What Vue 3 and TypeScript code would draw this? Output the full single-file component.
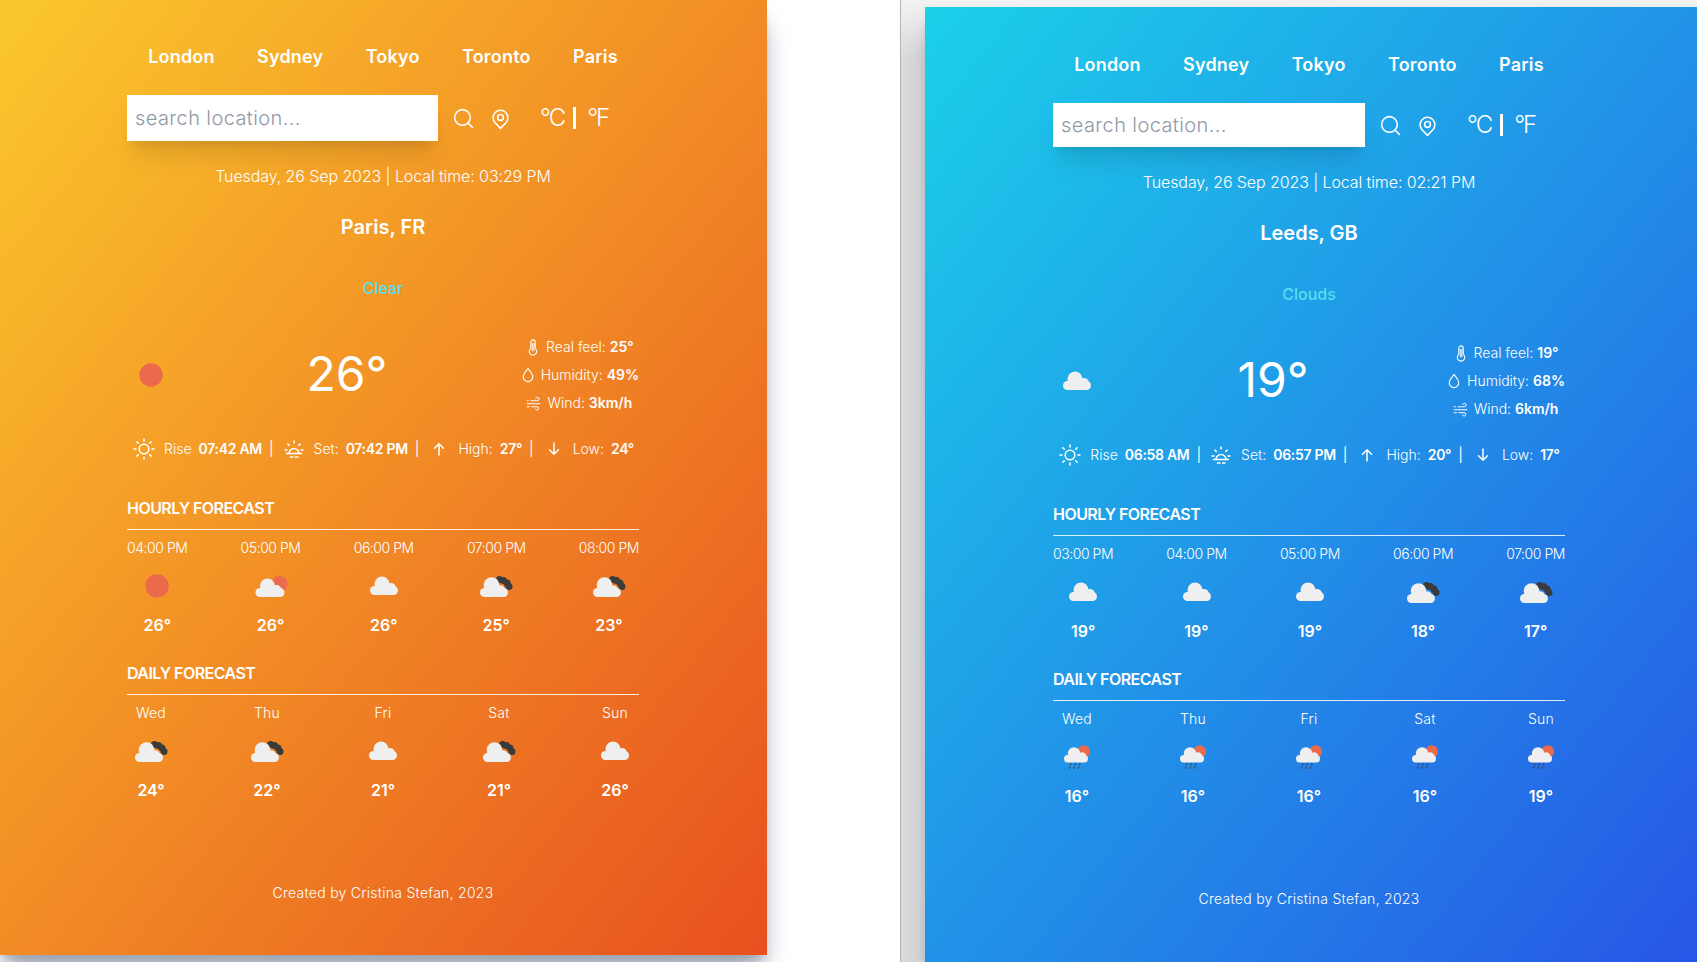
<script setup lang="ts">
type Slot = { label: string; icon: string; temp: string };
type Panel = {
  tone: string;
  date: string;
  city: string;
  cond: string;
  icon: string;
  temp: string;
  feel: string;
  humidity: string;
  wind: string;
  rise: string;
  set: string;
  high: string;
  low: string;
  hourly: Slot[];
  daily: Slot[];
};

const cities = ["London", "Sydney", "Tokyo", "Toronto", "Paris"];

const slot = (label: string, icon: string, temp: string): Slot => ({ label, icon, temp });

const panels: Panel[] = [
  {
    tone: "warm",
    date: "Tuesday, 26 Sep 2023 | Local time: 03:29 PM",
    city: "Paris, FR",
    cond: "Clear",
    icon: "sun",
    temp: "26°",
    feel: "25°",
    humidity: "49%",
    wind: "3km/h",
    rise: "07:42 AM",
    set: "07:42 PM",
    high: "27°",
    low: "24°",
    hourly: [
      slot("04:00 PM", "sun", "26°"),
      slot("05:00 PM", "few", "26°"),
      slot("06:00 PM", "cloud", "26°"),
      slot("07:00 PM", "broken", "25°"),
      slot("08:00 PM", "broken", "23°"),
    ],
    daily: [
      slot("Wed", "broken", "24°"),
      slot("Thu", "broken", "22°"),
      slot("Fri", "cloud", "21°"),
      slot("Sat", "broken", "21°"),
      slot("Sun", "cloud", "26°"),
    ],
  },
  {
    tone: "cool",
    date: "Tuesday, 26 Sep 2023 | Local time: 02:21 PM",
    city: "Leeds, GB",
    cond: "Clouds",
    icon: "cloud",
    temp: "19°",
    feel: "19°",
    humidity: "68%",
    wind: "6km/h",
    rise: "06:58 AM",
    set: "06:57 PM",
    high: "20°",
    low: "17°",
    hourly: [
      slot("03:00 PM", "cloud", "19°"),
      slot("04:00 PM", "cloud", "19°"),
      slot("05:00 PM", "cloud", "19°"),
      slot("06:00 PM", "broken", "18°"),
      slot("07:00 PM", "broken", "17°"),
    ],
    daily: [
      slot("Wed", "rain", "16°"),
      slot("Thu", "rain", "16°"),
      slot("Fri", "rain", "16°"),
      slot("Sat", "rain", "16°"),
      slot("Sun", "rain", "19°"),
    ],
  },
];
</script>

<template>
  <div class="stage">
    <svg class="sprite" aria-hidden="true">
      <symbol id="wx-sun" viewBox="0 0 48 48">
        <circle cx="24" cy="24" r="11.7" fill="#ec6a4c" />
      </symbol>
      <symbol id="wx-cloud" viewBox="0 0 48 48">
        <g fill="#efefef">
          <rect x="10" y="24" width="28" height="9" rx="4.5" />
          <circle cx="22" cy="22" r="7.5" />
          <circle cx="31" cy="26" r="5" />
        </g>
      </symbol>
      <symbol id="wx-broken" viewBox="0 0 48 48">
        <g fill="#3b3b3b">
          <circle cx="27.5" cy="17.5" r="3.5" />
          <circle cx="31.5" cy="18.5" r="3.5" />
          <circle cx="35" cy="21" r="3.5" />
          <circle cx="37" cy="24.5" r="3.5" />
        </g>
        <g fill="#efefef">
          <rect x="8" y="26" width="28" height="9" rx="4.5" />
          <circle cx="19.5" cy="23" r="7.8" />
          <circle cx="28" cy="28" r="4.8" />
        </g>
      </symbol>
      <symbol id="wx-few" viewBox="0 0 48 48">
        <circle cx="32.5" cy="22" r="8" fill="#ec6a4c" />
        <g fill="#efefef" transform="translate(-1.5 2)">
          <rect x="10" y="24" width="29" height="9" rx="4.5" />
          <circle cx="22" cy="22" r="7.5" />
          <circle cx="31" cy="26" r="5" />
        </g>
      </symbol>
      <symbol id="wx-rain" viewBox="0 -1.5 48 48">
        <circle cx="30.7" cy="17" r="6.3" fill="#ec6a4c" />
        <g fill="#efefef">
          <rect x="11" y="20.5" width="24" height="7.5" rx="3.7" />
          <circle cx="21" cy="19" r="6.2" />
          <circle cx="29" cy="22" r="4.2" />
        </g>
        <g stroke="#3f4552" stroke-width="1.3" stroke-dasharray="2 1.4">
          <path d="M18 29l-2 6M22.5 29l-2 6M27 29l-2 6" />
        </g>
      </symbol>
      <symbol id="i-search" viewBox="0 0 24 24">
        <g fill="none" stroke="currentColor" stroke-width="1.5" stroke-linecap="round">
          <circle cx="11" cy="11" r="7.5" />
          <path d="M16.6 16.6L20.5 20.5" />
        </g>
      </symbol>
      <symbol id="i-pin" viewBox="0 0 24 24">
        <g fill="none" stroke="currentColor" stroke-width="1.5" stroke-linejoin="round">
          <path d="M12 21.5l-5-5.2a7.1 7.1 0 1 1 10 0z" />
          <circle cx="12" cy="11" r="2.8" />
        </g>
      </symbol>
      <symbol id="i-temp" viewBox="0 0 24 24">
        <g fill="none" stroke="currentColor" stroke-width="1.4" stroke-linecap="round">
          <path d="M12 2.5a3 3 0 0 0-3 3v8.3a5 5 0 1 0 6 0V5.5a3 3 0 0 0-3-3z" />
          <path d="M11 7v10M13.2 7v10" />
        </g>
      </symbol>
      <symbol id="i-drop" viewBox="0 0 24 24">
        <path
          d="M12 3.5c-3 3.5-6.3 7.3-6.3 11a6.3 6.3 0 0 0 12.6 0c0-3.7-3.3-7.5-6.3-11z"
          fill="none"
          stroke="currentColor"
          stroke-width="1.5"
        />
      </symbol>
      <symbol id="i-wind" viewBox="0 0 24 24">
        <g fill="none" stroke="currentColor" stroke-width="1.3" stroke-linecap="round">
          <path d="M8 9h8.5a2.3 2.3 0 1 0-2.2-3" />
          <path d="M3 9h1.5M3 13h17M3 17h3" />
          <path d="M9 17h7a2.2 2.2 0 1 1-2 3" />
        </g>
      </symbol>
      <symbol id="i-sunrise" viewBox="0 0 24 24">
        <g fill="none" stroke="currentColor" stroke-width="1.5" stroke-linecap="round">
          <circle cx="12" cy="12" r="4.8" />
          <path d="M12 2v2M12 20v2M2 12h2M20 12h2M4.9 4.9l1.4 1.4M17.7 17.7l1.4 1.4M4.9 19.1l1.4-1.4M17.7 6.3l1.4-1.4" />
        </g>
      </symbol>
      <symbol id="i-sunset" viewBox="0 0 24 24">
        <g fill="none" stroke="currentColor" stroke-width="1.5" stroke-linecap="round">
          <path d="M7 16.5a5 5 0 0 1 10 0" />
          <path d="M4.5 16.5h15M12 4v2M3 13h2M19 13h2M5.8 7l1.4 1.4M18.2 7l-1.4 1.4M8.5 20h2.5M13.5 20h2.5" />
        </g>
      </symbol>
      <symbol id="i-up" viewBox="0 0 24 24">
        <path d="M12 20V5M6 11l6-6 6 6" fill="none" stroke="currentColor" stroke-width="2" stroke-linecap="round" stroke-linejoin="round" />
      </symbol>
      <symbol id="i-down" viewBox="0 0 24 24">
        <path d="M12 4v15M6 13l6 6 6-6" fill="none" stroke="currentColor" stroke-width="2" stroke-linecap="round" stroke-linejoin="round" />
      </symbol>
    </svg>

    <div v-for="p in panels" :key="p.tone" :class="['frame', `frame--${p.tone}`]">
      <section :class="['panel', `panel--${p.tone}`]">
        <nav class="cities">
          <button v-for="c in cities" :key="c" class="city-btn">{{ c }}</button>
        </nav>

        <div class="search-row">
          <input class="search-input" type="text" placeholder="search location..." />
          <svg class="tool"><use href="#i-search" /></svg>
          <svg class="tool tool--pin"><use href="#i-pin" /></svg>
          <div class="units">
            <button class="unit">°C</button>
            <span class="unit-sep"></span>
            <button class="unit">°F</button>
          </div>
        </div>

        <p class="date">{{ p.date }}</p>
        <h1 class="place">{{ p.city }}</h1>
        <p class="cond">{{ p.cond }}</p>

        <div class="now">
          <svg class="wx"><use :href="`#wx-${p.icon}`" /></svg>
          <div class="now-temp">{{ p.temp }}</div>
          <ul class="details">
            <li><svg class="ico"><use href="#i-temp" /></svg>Real feel: <b>{{ p.feel }}</b></li>
            <li><svg class="ico"><use href="#i-drop" /></svg>Humidity: <b>{{ p.humidity }}</b></li>
            <li><svg class="ico"><use href="#i-wind" /></svg>Wind: <b>{{ p.wind }}</b></li>
          </ul>
        </div>

        <div class="sun-row">
          <svg class="ico ico--lg"><use href="#i-sunrise" /></svg>
          <span>Rise</span><b>{{ p.rise }}</b><i class="bar">|</i>
          <svg class="ico ico--lg"><use href="#i-sunset" /></svg>
          <span>Set:</span><b>{{ p.set }}</b><i class="bar">|</i>
          <svg class="ico ico--md"><use href="#i-up" /></svg>
          <span>High:</span><b>{{ p.high }}</b><i class="bar">|</i>
          <svg class="ico ico--md"><use href="#i-down" /></svg>
          <span>Low:</span><b>{{ p.low }}</b>
        </div>

        <h2 class="fc-title fc-title--first">HOURLY FORECAST</h2>
        <div class="fc-row fc-row--hours">
          <div v-for="h in p.hourly" :key="h.label" class="fc-item">
            <span class="fc-label">{{ h.label }}</span>
            <svg class="wx"><use :href="`#wx-${h.icon}`" /></svg>
            <b class="fc-temp">{{ h.temp }}</b>
          </div>
        </div>

        <h2 class="fc-title">DAILY FORECAST</h2>
        <div class="fc-row">
          <div v-for="d in p.daily" :key="d.label" class="fc-item">
            <span class="fc-label">{{ d.label }}</span>
            <svg class="wx"><use :href="`#wx-${d.icon}`" /></svg>
            <b class="fc-temp">{{ d.temp }}</b>
          </div>
        </div>

        <footer class="foot">Created by Cristina Stefan, 2023</footer>
      </section>
    </div>
  </div>
</template>

<style scoped>
.stage {
  display: flex;
  width: 1697px;
  height: 962px;
  overflow: hidden;
  background: #fff;
  font-family: Inter, "Liberation Sans", sans-serif;
  color: #fff;
}
.sprite {
  position: absolute;
  width: 0;
  height: 0;
}
.frame {
  flex: none;
}
.frame--warm {
  width: 767px;
}
.frame--cool {
  width: 797px;
  margin-left: 133px;
  padding: 7px 0 0 24px;
  border-left: 1px solid #b4b4b4;
  background: linear-gradient(#f3f3f3, #dadadc 60px);
}
.panel {
  display: flex;
  flex-direction: column;
  box-sizing: border-box;
  width: 767px;
  height: 955px;
  padding: 43px 128px 0 127px;
  box-shadow: 0 20px 25px -5px #9ca3af, 0 8px 10px -6px #9ca3af;
}
.panel--warm {
  background: linear-gradient(to bottom right, #fbc82c, #e8501f);
}
.panel--cool {
  width: 772px;
  padding: 44px 132px 0 128px;
  background: linear-gradient(to bottom right, #1bd0e9, #2756e6);
}
.cities {
  display: flex;
  justify-content: space-around;
  height: 27px;
}
.city-btn {
  border: 0;
  padding: 0;
  background: none;
  color: #fff;
  font: 600 18px/27px Inter, sans-serif;
  letter-spacing: 0.2px;
}
.search-row {
  display: flex;
  align-items: center;
  height: 46px;
  margin-top: 25px;
}
.panel--cool .search-row {
  margin-top: 24px;
}
.search-input {
  box-sizing: border-box;
  width: 311px;
  height: 46px;
  border: 0;
  outline: 0;
  padding: 0 8px;
  background: #fff;
  font: 300 20px Inter, sans-serif;
  letter-spacing: 0.4px;
  box-shadow: 0 20px 25px -5px rgba(0, 0, 0, 0.1), 0 8px 10px -6px rgba(0, 0, 0, 0.1);
}
.panel--cool .search-input {
  width: 312px;
  height: 44px;
}
.search-input::placeholder {
  color: #8f99a8;
}
.tool {
  flex: none;
  width: 25px;
  height: 25px;
  margin-left: 13px;
}
.tool--pin {
  margin-left: 12px;
}
.units {
  display: flex;
  align-items: center;
  margin-left: 27px;
}
.unit {
  border: 0;
  padding: 0;
  background: none;
  color: #fff;
  font: 300 24px/32px Inter, sans-serif;
  letter-spacing: -2px;
}
.unit-sep {
  width: 3px;
  height: 22px;
  margin: 0 11px 0 9px;
  background: #fff;
}
.date {
  margin: 23px 0 0;
  font-weight: 300;
  font-size: 16px;
  line-height: 24px;
  letter-spacing: -0.1px;
  text-align: center;
}
.panel--cool .date {
  margin-top: 22px;
}
.place {
  margin: 24px 0 0;
  font-weight: 600;
  font-size: 20px;
  line-height: 30px;
  text-align: center;
}
.cond {
  margin: 34px 0 0;
  color: #56dfee;
  font-weight: 500;
  font-size: 16px;
  line-height: 24px;
  text-align: center;
}
.now {
  display: flex;
  align-items: center;
  justify-content: space-between;
  height: 90px;
  margin-top: 30px;
}
.wx {
  flex: none;
  width: 48px;
  height: 48px;
}
.now-temp {
  padding-bottom: 3px;
  font-size: 48px;
  font-weight: 400;
  line-height: 60px;
}
.details {
  display: flex;
  flex-direction: column;
  align-items: center;
  gap: 8px;
  margin: 0;
  padding: 0;
  list-style: none;
  font-weight: 300;
  font-size: 14px;
  line-height: 20px;
}
.details li {
  display: flex;
  align-items: center;
  white-space: pre;
}
.details .ico {
  margin-right: 4px;
}
b {
  font-weight: 600;
}
.ico {
  flex: none;
  width: 18px;
  height: 18px;
}
.ico--lg {
  width: 24px;
  height: 24px;
}
.ico--md {
  width: 18px;
  height: 18px;
}
.sun-row {
  display: flex;
  align-items: center;
  justify-content: center;
  height: 20px;
  margin-top: 19px;
  font-weight: 300;
  font-size: 14px;
  line-height: 20px;
  white-space: nowrap;
}
.sun-row b {
  letter-spacing: -0.3px;
}
.sun-row span {
  margin: 0 7px 0 8px;
}
.sun-row .ico--md {
  margin-left: 3px;
}
.sun-row .ico--md + span {
  margin-left: 10px;
}
.bar {
  margin: 0 8px 0 7px;
  font-style: normal;
  font-weight: 400;
}
.fc-title {
  margin: 24px 0 0;
  padding-bottom: 9px;
  border-bottom: 1px solid rgba(255, 255, 255, 0.85);
  font-weight: 600;
  font-size: 16px;
  line-height: 24px;
  letter-spacing: -0.55px;
}
.fc-title--first {
  margin-top: 37px;
}
.fc-row {
  display: flex;
  justify-content: space-between;
  margin-top: 8px;
}
.fc-item {
  display: flex;
  flex-direction: column;
  align-items: center;
  min-width: 48px;
}
.fc-label {
  font-weight: 300;
  font-size: 14px;
  line-height: 20px;
  letter-spacing: 0.2px;
}
.fc-row--hours .fc-label {
  letter-spacing: -0.45px;
}
.fc-item .wx {
  margin-top: 4px;
}
.fc-temp {
  margin-top: 3px;
  font-size: 16px;
  line-height: 24px;
}
.foot {
  margin-top: auto;
  padding-bottom: 52px;
  font-weight: 300;
  font-size: 14px;
  line-height: 20px;
  letter-spacing: 0.27px;
  text-align: center;
}
.panel--cool .foot {
  padding-bottom: 53px;
}
</style>

<style>
html,
body {
  margin: 0;
  overflow: hidden;
  background: #fff;
}
</style>
